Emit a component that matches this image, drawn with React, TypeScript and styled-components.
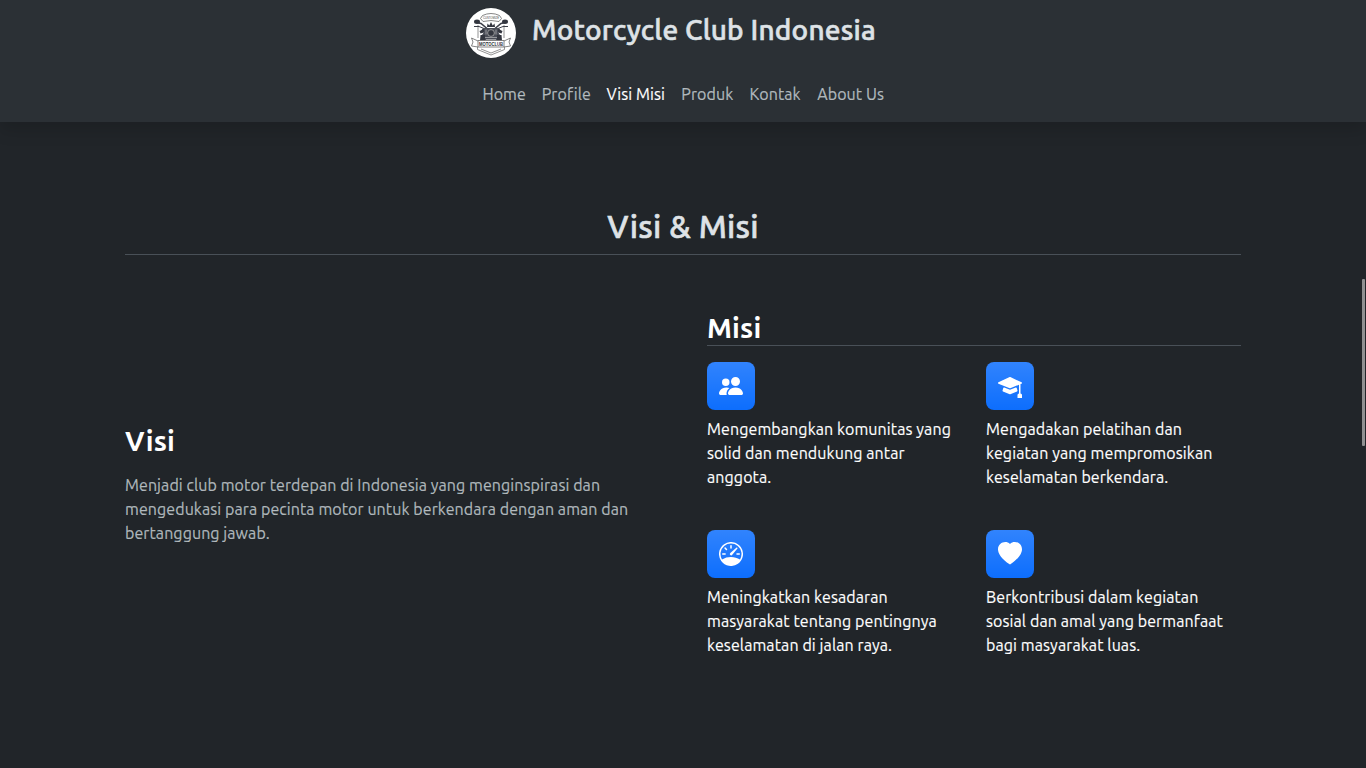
import React from 'react';
import { BsHeartFill, BsMortarboardFill, BsPeopleFill, BsSpeedometer } from 'react-icons/bs';
import styled, { createGlobalStyle } from 'styled-components';

const GlobalStyle = createGlobalStyle`
  *, *::before, *::after { box-sizing: border-box; }
  body {
    margin: 0;
    background: #212529;
    color: #dee2e6;
    font: 400 16px/1.5 Ubuntu, "Noto Sans", sans-serif;
  }
  h2, h3, p, ul { margin: 0; padding: 0; }
`;

const Page = styled.div`
  position: relative;
  height: 768px;
  overflow: hidden;
`;

const Header = styled.header`
  display: flex;
  flex-direction: column;
  align-items: center;
  gap: 16px;
  height: 122px;
  padding: 8px 0;
  background: #2b3035;
  box-shadow: 0 8px 16px rgba(0, 0, 0, 0.15);
`;

const Brand = styled.a`
  display: flex;
  align-items: center;
  gap: 16px;
  width: 434px;
  height: 50px;
`;

const Logo = styled.svg`
  flex: none;
  width: 50px;
  height: 50px;
`;

const BrandName = styled.h3`
  padding-bottom: 6px;
  font-size: 28px;
  font-weight: 500;
  line-height: 1.2;
  letter-spacing: 0.2px;
  white-space: nowrap;
  -webkit-text-stroke: 0.6px currentColor;
`;

const Nav = styled.nav`
  display: flex;
`;

const NavLink = styled.a<{ $active?: boolean; $width: number }>`
  width: ${(p) => p.$width}px;
  padding: 8px;
  white-space: nowrap;
  letter-spacing: 0.1px;
  color: ${(p) => (p.$active ? '#fff' : 'rgba(222, 226, 230, 0.75)')};
  -webkit-text-stroke: 0.15px currentColor;
`;

const Container = styled.main`
  width: 1116px;
  margin: 0 auto;
  padding-top: 85px;
`;

const SectionTitle = styled.h2`
  padding-bottom: 8.6px;
  border-bottom: 1px solid #495057;
  font-size: 32px;
  font-weight: 500;
  line-height: 1.2;
  letter-spacing: 0.25px;
  text-align: center;
  -webkit-text-stroke: 0.6px currentColor;
`;

const Columns = styled.div`
  display: grid;
  grid-template-columns: 534px 534px;
  column-gap: 48px;
  align-items: center;
  padding-top: 56.4px;
`;

const Column = styled.section`
  padding-bottom: 16px;
`;

const Heading = styled.h3<{ $ruled?: boolean }>`
  margin-bottom: 16px;
  border-bottom: ${(p) => (p.$ruled ? '1px solid #495057' : '0')};
  color: #fff;
  font-size: 28px;
  font-weight: 700;
  line-height: 1.2;
  letter-spacing: 0.2px;
`;

const Text = styled.p<{ $muted?: boolean }>`
  color: ${(p) => (p.$muted ? 'rgba(222, 226, 230, 0.75)' : '#fff')};
  letter-spacing: ${(p) => (p.$muted ? '0.08px' : '0.1px')};
  -webkit-text-stroke: 0.15px currentColor;
`;

const Missions = styled.div`
  display: grid;
  grid-template-columns: 255px 255px;
  gap: 41px 24px;
  padding-bottom: 1px;
`;

const Mission = styled.article`
  display: flex;
  flex-direction: column;
  gap: 7px;
`;

const IconTile = styled.div`
  display: flex;
  align-items: center;
  justify-content: center;
  width: 48px;
  height: 48px;
  border-radius: 8px;
  background: #0d6efd linear-gradient(180deg, rgba(255, 255, 255, 0.15), rgba(255, 255, 255, 0));
  color: #fff;
  font-size: 24px;
`;

const ScrollThumb = styled.div`
  position: absolute;
  top: 279px;
  right: 1px;
  width: 3px;
  height: 167px;
  border-radius: 1px;
  background: #909192;
`;

const links = [
  { label: 'Home', width: 59.3 },
  { label: 'Profile', width: 64.8 },
  { label: 'Visi Misi', width: 74.8, active: true },
  { label: 'Produk', width: 68.3 },
  { label: 'Kontak', width: 67.6 },
  { label: 'About Us', width: 82.4 },
];

const missions = [
  { Icon: BsPeopleFill, lines: ['Mengembangkan komunitas yang', 'solid dan mendukung antar', 'anggota.'] },
  { Icon: BsMortarboardFill, lines: ['Mengadakan pelatihan dan', 'kegiatan yang mempromosikan', 'keselamatan berkendara.'] },
  { Icon: BsSpeedometer, lines: ['Meningkatkan kesadaran', 'masyarakat tentang pentingnya', 'keselamatan di jalan raya.'] },
  { Icon: BsHeartFill, lines: ['Berkontribusi dalam kegiatan', 'sosial dan amal yang bermanfaat', 'bagi masyarakat luas.'] },
];

const vision = [
  'Menjadi club motor terdepan di Indonesia yang menginspirasi dan',
  'mengedukasi para pecinta motor untuk berkendara dengan aman dan',
  'bertanggung jawab.',
];

function Lines({ lines }: { lines: string[] }) {
  return (
    <>
      {lines.map((line, i) => (
        <React.Fragment key={line}>
          {i > 0 && <br />}
          {line}
        </React.Fragment>
      ))}
    </>
  );
}

function ClubLogo() {
  return (
    <Logo viewBox="0 0 50 50" fill="none" stroke="#3b3e48" strokeWidth="0.8">
      <circle cx="25" cy="25" r="25" fill="#fff" stroke="none" />
      <path d="M16.500 7.500Q25 3.500 33.500 7.500l2 3-2.500 3Q25 11.500 17 13.500l-2.500-3z" stroke="#666" />
      <path d="M12 17v13M38 17v13" stroke="#777" />
      <path d="M11.500 39v2.500L25 47l13.500-5.500V39M15 41l10 4 10-4" stroke="#777" />
      <path d="M11 14.500l4 1 6 5M39 14.500l-4 1-6 5" strokeWidth="1.600" />
      <path d="M8 18.500h5l5 2M42 18.500h-5l-5 2" strokeWidth="1" />
      <g fill="#33363f" stroke="none">
        <ellipse cx="11" cy="13.700" rx="3" ry="2.200" />
        <ellipse cx="39" cy="13.700" rx="3" ry="2.200" />
        <path d="M21 19l.5-3.500 1.800 2L25 14l1.700 3.500 1.800-2 .5 3.500z" />
        <path d="M17 20h16l2 3-3 1 2 3-2 5H18l-2-5 2-3-3-1z" fill="#4a4d57" />
        <path d="M13.500 23l4.500-2v3.500l-3.500 1zM36.500 23L32 21v3.500l3.500 1zM14.500 27h4.500v5.500h-5zM35.500 27H31v5.500h5z" />
      </g>
      <circle cx="25" cy="25" r="3.400" fill="#33363f" stroke="#aaa" />
      <path d="M19 29.500h12M20 31.500h10M20 21.500v5M30 21.500v5" stroke="#ccc" strokeWidth="0.600" />
      <path d="M12 32.500h26v6.500H12zM12 33l-6.500-3 1.500 4L5.500 38l6.500 1M38 33l6.500-3-1.500 4 1.500 4-6.500 1" fill="#fff" stroke="#666" />
      <text x="25" y="37.700" textAnchor="middle" textLength="24" lengthAdjust="spacingAndGlyphs" fontFamily="Liberation Sans, sans-serif" fontSize="5.400" fontWeight="700" fill="#30333b" stroke="none">MOTOCLUB</text>
      <text x="25" y="10.800" textAnchor="middle" textLength="16" lengthAdjust="spacingAndGlyphs" fontFamily="Liberation Sans, sans-serif" fontSize="4" fill="#444" stroke="none">CUSTOMIZE</text>
    </Logo>
  );
}

export default function App() {
  return (
    <Page>
      <GlobalStyle />
      <Header>
        <Brand>
          <ClubLogo />
          <BrandName>Motorcycle Club Indonesia</BrandName>
        </Brand>
        <Nav>
          {links.map((l) => (
            <NavLink key={l.label} $active={l.active} $width={l.width}>{l.label}</NavLink>
          ))}
        </Nav>
      </Header>
      <Container>
        <SectionTitle>Visi &amp; Misi</SectionTitle>
        <Columns>
          <Column>
            <Heading>Visi</Heading>
            <Text $muted><Lines lines={vision} /></Text>
          </Column>
          <Column>
            <Heading $ruled>Misi</Heading>
            <Missions>
              {missions.map(({ Icon, lines }) => (
                <Mission key={lines[0]}>
                  <IconTile><Icon /></IconTile>
                  <Text><Lines lines={lines} /></Text>
                </Mission>
              ))}
            </Missions>
          </Column>
        </Columns>
      </Container>
      <ScrollThumb />
    </Page>
  );
}
